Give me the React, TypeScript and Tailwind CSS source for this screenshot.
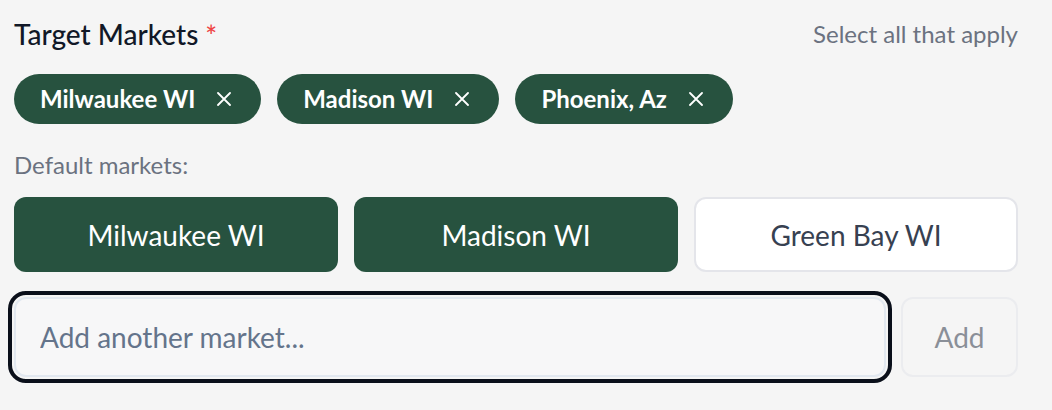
import { useState } from "react";

const selected = ["Milwaukee WI", "Madison WI", "Phoenix, Az"];

const defaults = [
  { name: "Milwaukee WI", active: true },
  { name: "Madison WI", active: true },
  { name: "Green Bay WI", active: false },
];

function XIcon() {
  return (
    <svg width="14" height="14" viewBox="0 0 14 14" fill="none" stroke="currentColor" strokeWidth="1.8" strokeLinecap="round">
      <path d="M1 1l12 12M13 1L1 13" />
    </svg>
  );
}

export default function App() {
  const [value, setValue] = useState("");

  return (
    <div
      className="w-[1052px] h-[410px] bg-[#f5f5f5] pl-[14px] pt-[14px]"
      style={{ fontFamily: "Lato, 'Noto Sans', sans-serif" }}
    >
      <div className="w-[1004px] flex flex-col">
        {/* Header */}
        <div className="flex items-center justify-between h-[40px]">
          <div className="flex items-start text-[28px] font-medium text-[#111827] leading-[40px]">
            Target Markets
            <span className="ml-[7px] mt-[6px] text-[#ef4444] text-[28px] leading-[30px]">*</span>
          </div>
          <span className="text-[24px] text-[#6b7280] leading-[40px]">Select all that apply</span>
        </div>

        {/* Selected chips */}
        <div className="flex gap-[16px] mt-[20px]">
          {selected.map((m) => (
            <div
              key={m}
              className="flex items-center h-[50px] rounded-full bg-[#27523f] text-white pl-[26px] pr-[30px] gap-[22px]"
            >
              <span className="text-[24px] font-bold leading-none">{m}</span>
              <XIcon />
            </div>
          ))}
        </div>

        {/* Default markets */}
        <div className="mt-[25px] text-[24px] leading-[32px] text-[#6b7280]">Default markets:</div>
        <div className="grid grid-cols-3 gap-[16px] mt-[16px]">
          {defaults.map((d) => (
            <button
              key={d.name}
              className={
                d.active
                  ? "h-[75px] rounded-[12px] bg-[#27523f] text-white text-[28px]"
                  : "h-[75px] rounded-[12px] bg-white border-2 border-[#e4e5ea] text-[#374151] text-[28px]"
              }
            >
              {d.name}
            </button>
          ))}
        </div>

        {/* Add market */}
        <div className="flex gap-[15px] mt-[25px]">
          <input
            value={value}
            onChange={(e) => setValue(e.target.value)}
            placeholder="Add another market..."
            className="flex-1 h-[80px] rounded-[12px] bg-[#f7f7f8] border-2 border-[#e2e8f0] px-[24px] text-[28px] text-[#111827] placeholder:text-[#64748b] outline-[4px] outline-solid outline-[#0a0f1a] outline-offset-[2px]"
            style={{ fontFamily: "Lato, 'Noto Sans', sans-serif" }}
          />
          <button className="w-[117px] h-[80px] rounded-[12px] border-2 border-[#ebecef] bg-[#f5f5f5] text-[28px] text-[#8a8f98]">
            Add
          </button>
        </div>
      </div>
    </div>
  );
}
